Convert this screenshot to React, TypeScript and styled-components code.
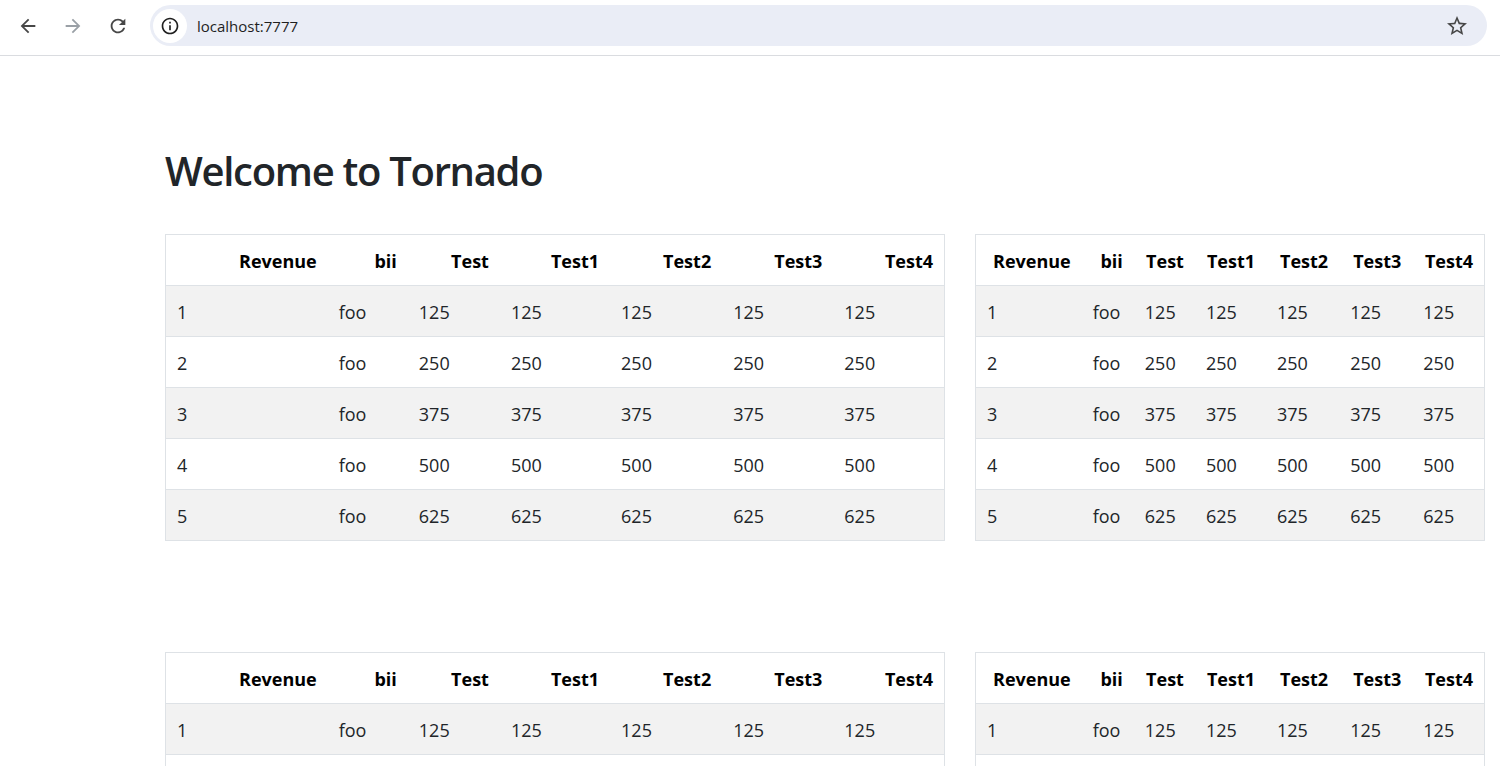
import React from "react";
import styled, { createGlobalStyle } from "styled-components";

const GlobalStyle = createGlobalStyle`
  html, body { margin: 0; padding: 0; background: #ffffff; }
  body { font-family: "Open Sans", "Noto Sans", sans-serif; color: #212529; }
  * { box-sizing: border-box; }
`;

const Toolbar = styled.header`
  display: flex;
  align-items: flex-start;
  height: 56px;
  padding: 5px 13px 0 5px;
  border-bottom: 1px solid #dadce0;
  background: #ffffff;
`;

const NavButton = styled.div<{ $dim?: boolean }>`
  width: 45px;
  height: 41px;
  display: flex;
  align-items: center;
  justify-content: center;
  color: ${(p) => (p.$dim ? "#9aa0a6" : "#474747")};
`;

const Omnibox = styled.div`
  flex: 1;
  margin-left: 10px;
  height: 41px;
  border-radius: 21px;
  background: #eaedf6;
  display: flex;
  align-items: center;
  padding: 0 18px 0 3px;
`;

const InfoBadge = styled.div`
  width: 34px;
  height: 34px;
  border-radius: 50%;
  background: #ffffff;
  display: flex;
  align-items: center;
  justify-content: center;
  color: #1f1f1f;
`;

const Url = styled.span`
  margin-left: 10px;
  font-family: "Open Sans", sans-serif;
  font-size: 15px;
  color: #1f1f1f;
  flex: 1;
`;

const StarWrap = styled.div`
  display: flex;
  color: #474747;
`;

const Main = styled.main`
  padding: 91px 0 40px 165px;
`;

const Title = styled.h1`
  margin: 0 0 39px;
  font-size: 40px;
  line-height: 48px;
  font-weight: 600;
  letter-spacing: -1.3px;
  color: #212529;
`;

const TableRow = styled.div`
  display: flex;
  gap: 30px;
  align-items: flex-start;
  margin-bottom: 111px;
`;

const DataTable = styled.table<{ $width: number }>`
  width: ${(p) => p.$width}px;
  table-layout: fixed;
  border-collapse: collapse;
  border: 1px solid #dee2e6;
  font-size: 18px;
  line-height: 26px;
  color: #212529;
`;

const HeadCell = styled.th`
  padding: 13px 11px 11px;
  text-align: right;
  font-weight: 700;
  color: #000000;
  border-bottom: 1px solid #dee2e6;
  white-space: nowrap;
`;

const BodyRow = styled.tr<{ $striped: boolean }>`
  background: ${(p) => (p.$striped ? "#f2f2f2" : "#ffffff")};
`;

const Cell = styled.td`
  padding: 13px 11px 11px;
  text-align: left;
  border-bottom: 1px solid #dee2e6;
  white-space: nowrap;
`;

const headers = ["Revenue", "bii", "Test", "Test1", "Test2", "Test3", "Test4"];
const rows = [1, 2, 3, 4, 5].map((n) => [String(n), "foo", ...Array(5).fill(String(n * 125))]);

const wideCols = [162, 80, 92, 110, 112, 111, 111];
const narrowCols = [106, 52, 61, 71, 73, 73, 72];

function Frame({ cols, width }: { cols: number[]; width: number }) {
  return (
    <DataTable $width={width}>
      <colgroup>
        {cols.map((w, i) => (
          <col key={i} style={{ width: w }} />
        ))}
      </colgroup>
      <thead>
        <tr>
          {headers.map((h) => (
            <HeadCell key={h}>{h}</HeadCell>
          ))}
        </tr>
      </thead>
      <tbody>
        {rows.map((r, i) => (
          <BodyRow key={i} $striped={i % 2 === 0}>
            {r.map((v, j) => (
              <Cell key={j}>{v}</Cell>
            ))}
          </BodyRow>
        ))}
      </tbody>
    </DataTable>
  );
}

const BackIcon = () => (
  <svg width="22" height="22" viewBox="0 0 24 24" fill="currentColor">
    <path d="M20 11H7.83l5.59-5.59L12 4l-8 8 8 8 1.41-1.41L7.83 13H20v-2z" />
  </svg>
);

const ForwardIcon = () => (
  <svg width="22" height="22" viewBox="0 0 24 24" fill="currentColor">
    <path d="M4 11h12.17l-5.59-5.59L12 4l8 8-8 8-1.41-1.41L16.17 13H4v-2z" />
  </svg>
);

const ReloadIcon = () => (
  <svg width="22" height="22" viewBox="0 0 24 24" fill="currentColor">
    <path d="M17.65 6.35C16.2 4.9 14.21 4 12 4c-4.42 0-7.99 3.58-7.99 8s3.57 8 7.99 8c3.73 0 6.84-2.55 7.73-6h-2.08c-.82 2.33-3.04 4-5.65 4-3.31 0-6-2.69-6-6s2.69-6 6-6c1.66 0 3.14.69 4.22 1.78L13 11h7V4l-2.35 2.35z" />
  </svg>
);

const InfoIcon = () => (
  <svg width="20" height="20" viewBox="0 0 24 24" fill="currentColor">
    <path d="M11 7h2v2h-2zm0 4h2v6h-2zm1-9C6.48 2 2 6.48 2 12s4.48 10 10 10 10-4.48 10-10S17.52 2 12 2zm0 18c-4.41 0-8-3.59-8-8s3.59-8 8-8 8 3.59 8 8-3.59 8-8 8z" />
  </svg>
);

const StarIcon = () => (
  <svg width="24" height="24" viewBox="0 0 24 24" fill="currentColor">
    <path d="M22 9.24l-7.19-.62L12 2 9.19 8.63 2 9.24l5.46 4.73L5.82 21 12 17.27 18.18 21l-1.63-7.03L22 9.24zM12 15.4l-3.76 2.27 1-4.28-3.32-2.88 4.38-.38L12 6.1l1.71 4.04 4.38.38-3.32 2.88 1 4.28L12 15.4z" />
  </svg>
);

export default function App() {
  return (
    <>
      <GlobalStyle />
      <Toolbar>
        <NavButton>
          <BackIcon />
        </NavButton>
        <NavButton $dim>
          <ForwardIcon />
        </NavButton>
        <NavButton>
          <ReloadIcon />
        </NavButton>
        <Omnibox>
          <InfoBadge>
            <InfoIcon />
          </InfoBadge>
          <Url>localhost:7777</Url>
          <StarWrap>
            <StarIcon />
          </StarWrap>
        </Omnibox>
      </Toolbar>
      <Main>
        <Title>Welcome to Tornado</Title>
        <TableRow>
          <Frame cols={wideCols} width={780} />
          <Frame cols={narrowCols} width={510} />
        </TableRow>
        <TableRow>
          <Frame cols={wideCols} width={780} />
          <Frame cols={narrowCols} width={510} />
        </TableRow>
      </Main>
    </>
  );
}
